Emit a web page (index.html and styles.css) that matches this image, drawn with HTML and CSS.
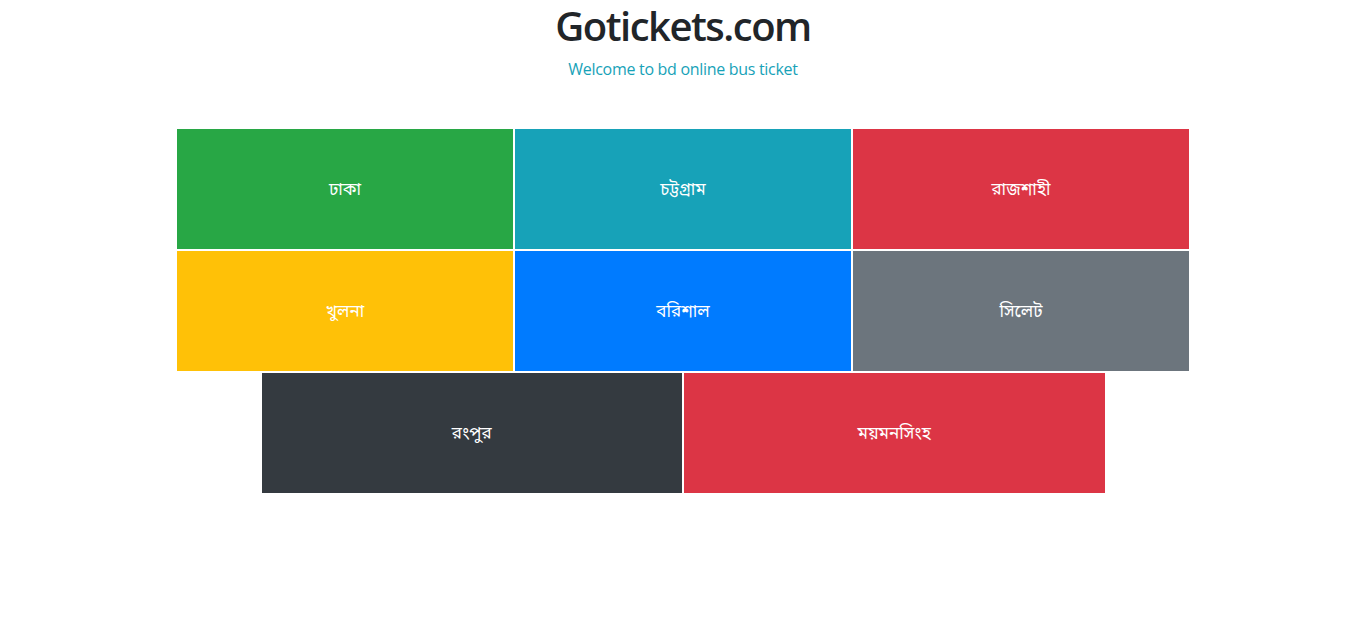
FILE: index.html
```html
<!DOCTYPE html>
<html lang="bn">
<head>
<meta charset="utf-8">
<title>Gotickets.com</title>
<link rel="stylesheet" href="styles.css">
</head>
<body>
<header class="head">
  <h1 class="title">Gotickets.com</h1>
  <p class="subtitle">Welcome to bd online bus ticket</p>
</header>
<main class="board">
  <div class="row">
    <a class="tile third green">ঢাকা</a>
    <a class="tile third teal">চট্টগ্রাম</a>
    <a class="tile third red">রাজশাহী</a>
  </div>
  <div class="row">
    <a class="tile third yellow">খুলনা</a>
    <a class="tile third blue">বরিশাল</a>
    <a class="tile third gray">সিলেট</a>
  </div>
  <div class="row">
    <a class="tile wide dark">রংপুর</a>
    <a class="tile wide red">ময়মনসিংহ</a>
  </div>
</main>
</body>
</html>
```
FILE: styles.css
```css
* { box-sizing: border-box; }
body {
  margin: 0;
  background: #fff;
  font-family: "Open Sans", "Noto Sans", "Noto Sans Bengali", "Liberation Sans", sans-serif;
  color: #212529;
}
.head {
  text-align: center;
  padding-top: 2px;
}
.title {
  margin: 0;
  font-size: 40px;
  font-weight: 600;
  letter-spacing: -1.5px;
  line-height: 48px;
  color: #212529;
}
.subtitle {
  margin: 7px 0 0;
  font-size: 16px;
  letter-spacing: -0.3px;
  line-height: 24px;
  color: #17a2b8;
}
.board {
  width: 1014px;
  margin: 47px auto 0;
}
.row {
  display: flex;
  justify-content: center;
}
.tile {
  display: flex;
  align-items: center;
  justify-content: center;
  height: 122px;
  border: 1px solid #fff;
  color: #fff;
  font-size: 17px;
  text-decoration: none;
}
.third { width: 338px; }
.wide { width: 422.5px; }
.green { background: #28a745; }
.teal { background: #17a2b8; }
.red { background: #dc3545; }
.yellow { background: #ffc107; }
.blue { background: #007bff; }
.gray { background: #6c757d; }
.dark { background: #343a40; }
```
